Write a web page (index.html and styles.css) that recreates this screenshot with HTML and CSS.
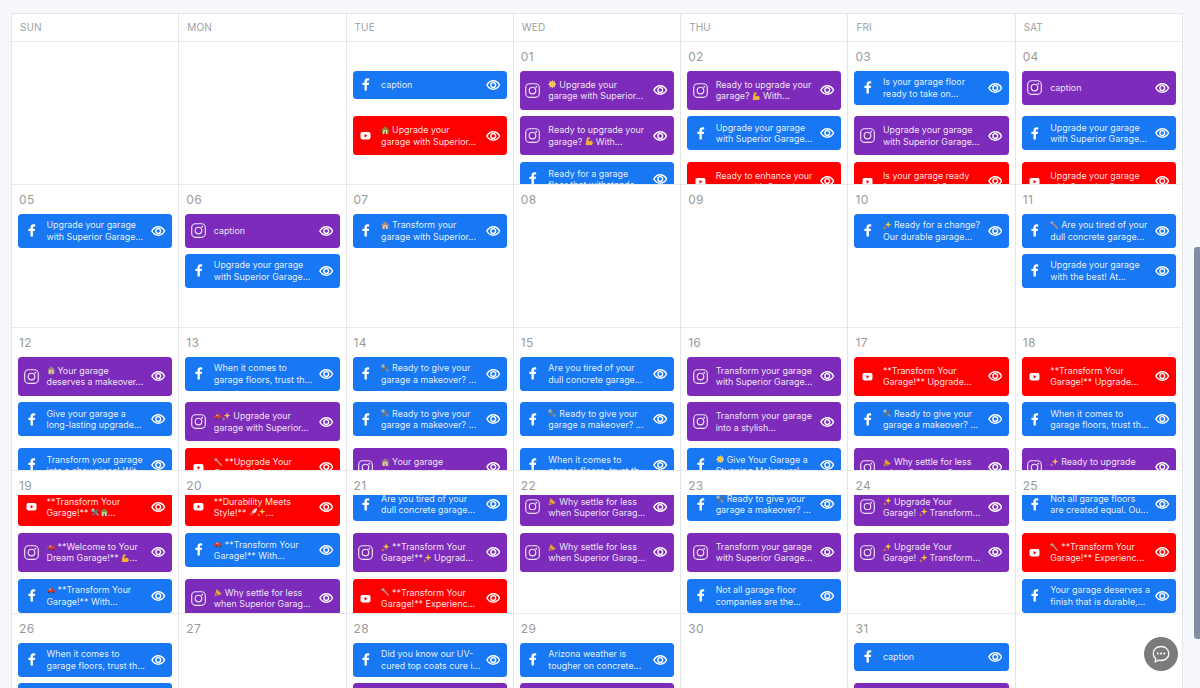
FILE: index.html
```html
<!DOCTYPE html>
<html lang="en">
<head>
<meta charset="utf-8">
<title>Content calendar</title>
<link rel="stylesheet" href="styles.css">
</head>
<body>
<svg class="defs" aria-hidden="true">
  <symbol id="fb" viewBox="0 0 15 15"><path fill="#fff" d="M8.900 13.500V8.100h1.900l.3-2.300H8.900V4.600c0-.7.3-1.100 1.100-1.100h1.200V1.500C10.900 1.400 10.300 1.300 9.600 1.300 7.800 1.300 6.500 2.400 6.500 4.300v1.500H4.400v2.300h2.100v5.400z"/></symbol>
  <symbol id="ig" viewBox="0 0 15 15"><rect x=".7" y=".7" width="13.600" height="13.600" rx="3.800" fill="none" stroke="#fff" stroke-opacity=".88" stroke-width="1.150"/><circle cx="7.500" cy="7.500" r="3.300" fill="none" stroke="#fff" stroke-opacity=".88" stroke-width="1.150"/><circle cx="11.300" cy="3.700" r=".9" fill="#fff" fill-opacity=".88"/></symbol>
  <symbol id="yt" viewBox="0 0 15 15"><rect x="2.500" y="4" width="10" height="7.400" rx="1.800" fill="#fff"/><path fill="#f00" d="M6.500 5.900v3.500l3-1.750z"/></symbol>
  <symbol id="eye" viewBox="0 0 14.500 10"><path fill="none" stroke="#fff" stroke-width="1.500" d="M.9 5C2.400 2.200 4.700 .8 7.250 .8s4.850 1.400 6.350 4.200c-1.500 2.800-3.800 4.200-6.350 4.200S2.400 7.800 .9 5z"/><circle cx="7.250" cy="5" r="2.400" fill="none" stroke="#fff" stroke-width="1.400"/></symbol>
  <symbol id="chat" viewBox="0 0 20 20"><path fill="none" stroke="#fff" stroke-width="1.300" d="M10 2.500c4.500 0 7.800 3 7.800 7s-3.300 7-7.800 7c-.9 0-1.700-.1-2.500-.3l-3.300 1.600.5-3.300C3.100 13.200 2.200 11.500 2.200 9.500c0-4 3.300-7 7.800-7z"/><circle cx="6.800" cy="9.500" r="1" fill="#fff"/><circle cx="10" cy="9.500" r="1" fill="#fff"/><circle cx="13.200" cy="9.500" r="1" fill="#fff"/></symbol>
  <symbol id="e-house" viewBox="0 0 12 12"><path fill="#a1887f" d="M6 .5 0 6h1.500v5.500h9V6H12z"/><rect x="3" y="6" width="6" height="5.500" fill="#eed9c4"/><rect x="5" y="7.500" width="2" height="4" fill="#8d6e63"/></symbol>
  <symbol id="e-hut" viewBox="0 0 12 12"><path fill="#7c8c3a" d="M6 .5 0 6h1.500v5.500h9V6H12z"/><rect x="3" y="6" width="6" height="5.500" fill="#f0d9b5"/><rect x="5" y="7.500" width="2" height="4" fill="#6d4c41"/></symbol>
  <symbol id="e-tools" viewBox="0 0 12 12"><path stroke="#8a98a2" stroke-width="2.400" d="M1.500 1.500l9 9"/><path stroke="#5d707c" stroke-width="2.400" d="M10.500 1.500l-9 9"/><path fill="#a4b4bd" d="M0 3 3 0l2.500 2.500-3 3z"/></symbol>
  <symbol id="e-spark" viewBox="0 0 12 12"><path fill="#f5c542" d="M7.300 0l1.200 3.800L12 5 8.500 6.200 7.300 10 6.100 6.200 2.600 5 6.100 3.800z"/><path fill="#f08a3c" d="M2.500 7l.7 2.100 2 .7-2 .7L2.500 12.500 1.800 10.500l-1.800-.7 1.800-.7z"/></symbol>
  <symbol id="e-car" viewBox="0 0 12 12"><path fill="#d83a3a" d="M0 8.500V6.300L2 5.500 3.500 2.800h4.300L9.800 5.500l2.200.7v2.800z"/><path fill="#9fc4de" d="M4 3.600h1.600v1.900H3z"/><circle cx="3" cy="9.200" r="1.500" fill="#444"/><circle cx="9" cy="9.200" r="1.500" fill="#444"/></symbol>
  <symbol id="e-wrench" viewBox="0 0 12 12"><path stroke="#c58a7a" stroke-width="2.100" d="M3 2l8 9"/><path fill="#9aa4aa" d="M0 2 3 0l2.300 2L2.700 4.700z"/></symbol>
  <symbol id="e-party" viewBox="0 0 12 12"><path fill="#e9a23b" d="M.8 11.500 3.500 1.500 11 8.500z"/><path fill="#9c6b3f" d="M2.500 6.500 7.200 10.500 4.700 11 1.800 9z"/></symbol>
  <symbol id="e-muscle" viewBox="0 0 12 12"><path fill="#f2b233" d="M3 .8h3.300l.8 1.800-2.200 1 .2 2.900C6 5.500 8 5 9.800 6c1.700 1 1.700 4 0 5-2.200 1-6.300 1-8.800.3.300-3.500.8-7.300 2-10.500z"/></symbol>
  <symbol id="e-star" viewBox="0 0 12 12"><path fill="#fde9a0" d="M6 0l1.300 2.700L10 1.500 9.300 4.300 12 6 9.300 7.700 10 10.500 7.300 9.300 6 12 4.700 9.300 2 10.500 2.700 7.700 0 6 2.700 4.300 2 1.500 4.700 2.700z"/><circle cx="6" cy="6" r="3.200" fill="#f7c32e"/></symbol>
  <symbol id="e-rocket" viewBox="0 0 12 12"><path fill="#d5dbe0" d="M11.500.5c-3.300.2-6 2-7.500 5.500l2 2c3.500-1.500 5.300-4.200 5.500-7.500z"/><path fill="#e0533a" d="M4 6 1 7l1.300.9L.5 11.500 4.100 9.700 5 11l1-3z"/></symbol>
</svg>

<main class="page">
  <section class="calendar">
    <div class="head">SUN</div><div class="head">MON</div><div class="head">TUE</div><div class="head">WED</div><div class="head">THU</div><div class="head">FRI</div><div class="head">SAT</div>

    <div class="cell"><div class="day"></div></div>
    <div class="cell"><div class="day"></div></div>
    <div class="cell"><div class="day"></div><div class="list">
      <div class="slot"><div class="card fb cap"><svg class="pi"><use href="#fb"/></svg><p class="txt">caption</p><svg class="eye"><use href="#eye"/></svg></div></div>
      <div class="slot"><div class="card yt"><svg class="pi"><use href="#yt"/></svg><p class="txt"><svg class="em"><use href="#e-hut"/></svg> Upgrade your<br>garage with Superior...</p><svg class="eye"><use href="#eye"/></svg></div></div>
    </div></div>
    <div class="cell"><div class="day">01</div><div class="list">
      <div class="slot"><div class="card ig"><svg class="pi"><use href="#ig"/></svg><p class="txt"><svg class="em"><use href="#e-star"/></svg> Upgrade your<br>garage with Superior...</p><svg class="eye"><use href="#eye"/></svg></div></div>
      <div class="slot"><div class="card ig"><svg class="pi"><use href="#ig"/></svg><p class="txt">Ready to upgrade your<br>garage? <svg class="em"><use href="#e-muscle"/></svg> With...</p><svg class="eye"><use href="#eye"/></svg></div></div>
      <div class="slot"><div class="card fb"><svg class="pi"><use href="#fb"/></svg><p class="txt">Ready for a garage<br>floor that withstands...</p><svg class="eye"><use href="#eye"/></svg></div></div>
    </div></div>
    <div class="cell"><div class="day">02</div><div class="list">
      <div class="slot"><div class="card ig"><svg class="pi"><use href="#ig"/></svg><p class="txt">Ready to upgrade your<br>garage? <svg class="em"><use href="#e-muscle"/></svg> With...</p><svg class="eye"><use href="#eye"/></svg></div></div>
      <div class="slot"><div class="card fb"><svg class="pi"><use href="#fb"/></svg><p class="txt">Upgrade your garage<br>with Superior Garage...</p><svg class="eye"><use href="#eye"/></svg></div></div>
      <div class="slot"><div class="card yt"><svg class="pi"><use href="#yt"/></svg><p class="txt">Ready to enhance your<br>garage with Superior...</p><svg class="eye"><use href="#eye"/></svg></div></div>
    </div></div>
    <div class="cell"><div class="day">03</div><div class="list">
      <div class="slot"><div class="card fb"><svg class="pi"><use href="#fb"/></svg><p class="txt">Is your garage floor<br>ready to take on...</p><svg class="eye"><use href="#eye"/></svg></div></div>
      <div class="slot"><div class="card ig"><svg class="pi"><use href="#ig"/></svg><p class="txt">Upgrade your garage<br>with Superior Garage...</p><svg class="eye"><use href="#eye"/></svg></div></div>
      <div class="slot"><div class="card yt"><svg class="pi"><use href="#yt"/></svg><p class="txt">Is your garage ready<br>for a new look? <svg class="em"><use href="#e-spark"/></svg>...</p><svg class="eye"><use href="#eye"/></svg></div></div>
    </div></div>
    <div class="cell"><div class="day">04</div><div class="list">
      <div class="slot"><div class="card ig cap"><svg class="pi"><use href="#ig"/></svg><p class="txt">caption</p><svg class="eye"><use href="#eye"/></svg></div></div>
      <div class="slot"><div class="card fb"><svg class="pi"><use href="#fb"/></svg><p class="txt">Upgrade your garage<br>with Superior Garage...</p><svg class="eye"><use href="#eye"/></svg></div></div>
      <div class="slot"><div class="card yt"><svg class="pi"><use href="#yt"/></svg><p class="txt">Upgrade your garage<br>with Superior Garage...</p><svg class="eye"><use href="#eye"/></svg></div></div>
    </div></div>

    <div class="cell compact"><div class="day">05</div><div class="list">
      <div class="slot"><div class="card fb"><svg class="pi"><use href="#fb"/></svg><p class="txt">Upgrade your garage<br>with Superior Garage...</p><svg class="eye"><use href="#eye"/></svg></div></div>
    </div></div>
    <div class="cell compact"><div class="day">06</div><div class="list">
      <div class="slot"><div class="card ig cap"><svg class="pi"><use href="#ig"/></svg><p class="txt">caption</p><svg class="eye"><use href="#eye"/></svg></div></div>
      <div class="slot"><div class="card fb"><svg class="pi"><use href="#fb"/></svg><p class="txt">Upgrade your garage<br>with Superior Garage...</p><svg class="eye"><use href="#eye"/></svg></div></div>
    </div></div>
    <div class="cell compact"><div class="day">07</div><div class="list">
      <div class="slot"><div class="card fb"><svg class="pi"><use href="#fb"/></svg><p class="txt"><svg class="em"><use href="#e-house"/></svg> Transform your<br>garage with Superior...</p><svg class="eye"><use href="#eye"/></svg></div></div>
    </div></div>
    <div class="cell compact"><div class="day">08</div></div>
    <div class="cell compact"><div class="day">09</div></div>
    <div class="cell compact"><div class="day">10</div><div class="list">
      <div class="slot"><div class="card fb"><svg class="pi"><use href="#fb"/></svg><p class="txt"><svg class="em"><use href="#e-spark"/></svg> Ready for a change?<br>Our durable garage...</p><svg class="eye"><use href="#eye"/></svg></div></div>
    </div></div>
    <div class="cell compact"><div class="day">11</div><div class="list">
      <div class="slot"><div class="card fb"><svg class="pi"><use href="#fb"/></svg><p class="txt"><svg class="em"><use href="#e-wrench"/></svg> Are you tired of your<br>dull concrete garage...</p><svg class="eye"><use href="#eye"/></svg></div></div>
      <div class="slot"><div class="card fb"><svg class="pi"><use href="#fb"/></svg><p class="txt">Upgrade your garage<br>with the best! At...</p><svg class="eye"><use href="#eye"/></svg></div></div>
    </div></div>

    <div class="cell"><div class="day">12</div><div class="list">
      <div class="slot"><div class="card ig"><svg class="pi"><use href="#ig"/></svg><p class="txt"><svg class="em"><use href="#e-house"/></svg> Your garage<br>deserves a makeover...</p><svg class="eye"><use href="#eye"/></svg></div></div>
      <div class="slot"><div class="card fb"><svg class="pi"><use href="#fb"/></svg><p class="txt">Give your garage a<br>long-lasting upgrade...</p><svg class="eye"><use href="#eye"/></svg></div></div>
      <div class="slot"><div class="card fb"><svg class="pi"><use href="#fb"/></svg><p class="txt">Transform your garage<br>into a showpiece! Wit...</p><svg class="eye"><use href="#eye"/></svg></div></div>
    </div></div>
    <div class="cell"><div class="day">13</div><div class="list">
      <div class="slot"><div class="card fb"><svg class="pi"><use href="#fb"/></svg><p class="txt">When it comes to<br>garage floors, trust th...</p><svg class="eye"><use href="#eye"/></svg></div></div>
      <div class="slot"><div class="card ig"><svg class="pi"><use href="#ig"/></svg><p class="txt"><svg class="em"><use href="#e-car"/></svg><svg class="em"><use href="#e-spark"/></svg> Upgrade your<br>garage with Superior...</p><svg class="eye"><use href="#eye"/></svg></div></div>
      <div class="slot"><div class="card yt"><svg class="pi"><use href="#yt"/></svg><p class="txt"><svg class="em"><use href="#e-wrench"/></svg> **Upgrade Your<br>Garage!** Experienc...</p><svg class="eye"><use href="#eye"/></svg></div></div>
    </div></div>
    <div class="cell"><div class="day">14</div><div class="list">
      <div class="slot"><div class="card fb"><svg class="pi"><use href="#fb"/></svg><p class="txt"><svg class="em"><use href="#e-tools"/></svg> Ready to give your<br>garage a makeover? ...</p><svg class="eye"><use href="#eye"/></svg></div></div>
      <div class="slot"><div class="card fb"><svg class="pi"><use href="#fb"/></svg><p class="txt"><svg class="em"><use href="#e-tools"/></svg> Ready to give your<br>garage a makeover? ...</p><svg class="eye"><use href="#eye"/></svg></div></div>
      <div class="slot"><div class="card ig"><svg class="pi"><use href="#ig"/></svg><p class="txt"><svg class="em"><use href="#e-house"/></svg> Your garage<br>deserves a makeover...</p><svg class="eye"><use href="#eye"/></svg></div></div>
    </div></div>
    <div class="cell"><div class="day">15</div><div class="list">
      <div class="slot"><div class="card fb"><svg class="pi"><use href="#fb"/></svg><p class="txt">Are you tired of your<br>dull concrete garage...</p><svg class="eye"><use href="#eye"/></svg></div></div>
      <div class="slot"><div class="card fb"><svg class="pi"><use href="#fb"/></svg><p class="txt"><svg class="em"><use href="#e-tools"/></svg> Ready to give your<br>garage a makeover? ...</p><svg class="eye"><use href="#eye"/></svg></div></div>
      <div class="slot"><div class="card fb"><svg class="pi"><use href="#fb"/></svg><p class="txt">When it comes to<br>garage floors, trust th...</p><svg class="eye"><use href="#eye"/></svg></div></div>
    </div></div>
    <div class="cell"><div class="day">16</div><div class="list">
      <div class="slot"><div class="card ig"><svg class="pi"><use href="#ig"/></svg><p class="txt">Transform your garage<br>with Superior Garage...</p><svg class="eye"><use href="#eye"/></svg></div></div>
      <div class="slot"><div class="card ig"><svg class="pi"><use href="#ig"/></svg><p class="txt">Transform your garage<br>into a stylish...</p><svg class="eye"><use href="#eye"/></svg></div></div>
      <div class="slot"><div class="card fb"><svg class="pi"><use href="#fb"/></svg><p class="txt"><svg class="em"><use href="#e-star"/></svg> Give Your Garage a<br>Stunning Makeover!...</p><svg class="eye"><use href="#eye"/></svg></div></div>
    </div></div>
    <div class="cell"><div class="day">17</div><div class="list">
      <div class="slot"><div class="card yt"><svg class="pi"><use href="#yt"/></svg><p class="txt">**Transform Your<br>Garage!** Upgrade...</p><svg class="eye"><use href="#eye"/></svg></div></div>
      <div class="slot"><div class="card fb"><svg class="pi"><use href="#fb"/></svg><p class="txt"><svg class="em"><use href="#e-tools"/></svg> Ready to give your<br>garage a makeover? ...</p><svg class="eye"><use href="#eye"/></svg></div></div>
      <div class="slot"><div class="card ig"><svg class="pi"><use href="#ig"/></svg><p class="txt"><svg class="em"><use href="#e-party"/></svg> Why settle for less<br>when Superior Garag...</p><svg class="eye"><use href="#eye"/></svg></div></div>
    </div></div>
    <div class="cell"><div class="day">18</div><div class="list">
      <div class="slot"><div class="card yt"><svg class="pi"><use href="#yt"/></svg><p class="txt">**Transform Your<br>Garage!** Upgrade...</p><svg class="eye"><use href="#eye"/></svg></div></div>
      <div class="slot"><div class="card fb"><svg class="pi"><use href="#fb"/></svg><p class="txt">When it comes to<br>garage floors, trust th...</p><svg class="eye"><use href="#eye"/></svg></div></div>
      <div class="slot"><div class="card ig"><svg class="pi"><use href="#ig"/></svg><p class="txt"><svg class="em"><use href="#e-spark"/></svg> Ready to upgrade<br>your garage floor...</p><svg class="eye"><use href="#eye"/></svg></div></div>
    </div></div>

    <div class="cell scrolled"><div class="day">19</div><div class="list"><div class="inner">
      <div class="slot"><div class="card yt"><svg class="pi"><use href="#yt"/></svg><p class="txt">**Transform Your<br>Garage!** <svg class="em"><use href="#e-tools"/></svg><svg class="em"><use href="#e-hut"/></svg>...</p><svg class="eye"><use href="#eye"/></svg></div></div>
      <div class="slot"><div class="card ig"><svg class="pi"><use href="#ig"/></svg><p class="txt"><svg class="em"><use href="#e-car"/></svg> **Welcome to Your<br>Dream Garage!** <svg class="em"><use href="#e-muscle"/></svg>...</p><svg class="eye"><use href="#eye"/></svg></div></div>
      <div class="slot"><div class="card fb"><svg class="pi"><use href="#fb"/></svg><p class="txt"><svg class="em"><use href="#e-car"/></svg> **Transform Your<br>Garage!** With...</p><svg class="eye"><use href="#eye"/></svg></div></div>
    </div></div></div>
    <div class="cell scrolled"><div class="day">20</div><div class="list"><div class="inner">
      <div class="slot"><div class="card yt"><svg class="pi"><use href="#yt"/></svg><p class="txt">**Durability Meets<br>Style!** <svg class="em"><use href="#e-rocket"/></svg><svg class="em"><use href="#e-spark"/></svg>...</p><svg class="eye"><use href="#eye"/></svg></div></div>
      <div class="slot"><div class="card fb"><svg class="pi"><use href="#fb"/></svg><p class="txt"><svg class="em"><use href="#e-car"/></svg> **Transform Your<br>Garage!** With...</p><svg class="eye"><use href="#eye"/></svg></div></div>
      <div class="slot"><div class="card ig"><svg class="pi"><use href="#ig"/></svg><p class="txt"><svg class="em"><use href="#e-party"/></svg> Why settle for less<br>when Superior Garag...</p><svg class="eye"><use href="#eye"/></svg></div></div>
    </div></div></div>
    <div class="cell scrolled"><div class="day">21</div><div class="list"><div class="inner">
      <div class="slot"><div class="card fb"><svg class="pi"><use href="#fb"/></svg><p class="txt">Are you tired of your<br>dull concrete garage...</p><svg class="eye"><use href="#eye"/></svg></div></div>
      <div class="slot"><div class="card ig"><svg class="pi"><use href="#ig"/></svg><p class="txt"><svg class="em"><use href="#e-spark"/></svg> **Transform Your<br>Garage!**<svg class="em"><use href="#e-spark"/></svg> Upgrad...</p><svg class="eye"><use href="#eye"/></svg></div></div>
      <div class="slot"><div class="card yt"><svg class="pi"><use href="#yt"/></svg><p class="txt"><svg class="em"><use href="#e-wrench"/></svg> **Transform Your<br>Garage!** Experienc...</p><svg class="eye"><use href="#eye"/></svg></div></div>
    </div></div></div>
    <div class="cell scrolled"><div class="day">22</div><div class="list"><div class="inner">
      <div class="slot"><div class="card ig"><svg class="pi"><use href="#ig"/></svg><p class="txt"><svg class="em"><use href="#e-party"/></svg> Why settle for less<br>when Superior Garag...</p><svg class="eye"><use href="#eye"/></svg></div></div>
      <div class="slot"><div class="card ig"><svg class="pi"><use href="#ig"/></svg><p class="txt"><svg class="em"><use href="#e-party"/></svg> Why settle for less<br>when Superior Garag...</p><svg class="eye"><use href="#eye"/></svg></div></div>
    </div></div></div>
    <div class="cell scrolled"><div class="day">23</div><div class="list"><div class="inner">
      <div class="slot"><div class="card fb"><svg class="pi"><use href="#fb"/></svg><p class="txt"><svg class="em"><use href="#e-tools"/></svg> Ready to give your<br>garage a makeover? ...</p><svg class="eye"><use href="#eye"/></svg></div></div>
      <div class="slot"><div class="card ig"><svg class="pi"><use href="#ig"/></svg><p class="txt">Transform your garage<br>with Superior Garage...</p><svg class="eye"><use href="#eye"/></svg></div></div>
      <div class="slot"><div class="card fb"><svg class="pi"><use href="#fb"/></svg><p class="txt">Not all garage floor<br>companies are the...</p><svg class="eye"><use href="#eye"/></svg></div></div>
    </div></div></div>
    <div class="cell scrolled"><div class="day">24</div><div class="list"><div class="inner">
      <div class="slot"><div class="card ig"><svg class="pi"><use href="#ig"/></svg><p class="txt"><svg class="em"><use href="#e-spark"/></svg> Upgrade Your<br>Garage! <svg class="em"><use href="#e-spark"/></svg> Transform...</p><svg class="eye"><use href="#eye"/></svg></div></div>
      <div class="slot"><div class="card ig"><svg class="pi"><use href="#ig"/></svg><p class="txt"><svg class="em"><use href="#e-spark"/></svg> Upgrade Your<br>Garage! <svg class="em"><use href="#e-spark"/></svg> Transform...</p><svg class="eye"><use href="#eye"/></svg></div></div>
    </div></div></div>
    <div class="cell scrolled"><div class="day">25</div><div class="list"><div class="inner">
      <div class="slot"><div class="card fb"><svg class="pi"><use href="#fb"/></svg><p class="txt">Not all garage floors<br>are created equal. Ou...</p><svg class="eye"><use href="#eye"/></svg></div></div>
      <div class="slot"><div class="card yt"><svg class="pi"><use href="#yt"/></svg><p class="txt"><svg class="em"><use href="#e-wrench"/></svg> **Transform Your<br>Garage!** Experienc...</p><svg class="eye"><use href="#eye"/></svg></div></div>
      <div class="slot"><div class="card fb"><svg class="pi"><use href="#fb"/></svg><p class="txt">Your garage deserves a<br>finish that is durable,...</p><svg class="eye"><use href="#eye"/></svg></div></div>
    </div></div></div>

    <div class="cell compact"><div class="day">26</div><div class="list">
      <div class="slot"><div class="card fb"><svg class="pi"><use href="#fb"/></svg><p class="txt">When it comes to<br>garage floors, trust th...</p><svg class="eye"><use href="#eye"/></svg></div></div>
      <div class="slot"><div class="card fb"><svg class="pi"><use href="#fb"/></svg><p class="txt">Upgrade your garage<br>with Superior Garage...</p><svg class="eye"><use href="#eye"/></svg></div></div>
    </div></div>
    <div class="cell compact"><div class="day">27</div></div>
    <div class="cell compact"><div class="day">28</div><div class="list">
      <div class="slot"><div class="card fb"><svg class="pi"><use href="#fb"/></svg><p class="txt">Did you know our UV-<br>cured top coats cure i...</p><svg class="eye"><use href="#eye"/></svg></div></div>
      <div class="slot"><div class="card ig"><svg class="pi"><use href="#ig"/></svg><p class="txt">Transform your garage<br>with Superior Garage...</p><svg class="eye"><use href="#eye"/></svg></div></div>
    </div></div>
    <div class="cell compact"><div class="day">29</div><div class="list">
      <div class="slot"><div class="card fb"><svg class="pi"><use href="#fb"/></svg><p class="txt">Arizona weather is<br>tougher on concrete...</p><svg class="eye"><use href="#eye"/></svg></div></div>
      <div class="slot"><div class="card ig"><svg class="pi"><use href="#ig"/></svg><p class="txt">Transform your garage<br>with Superior Garage...</p><svg class="eye"><use href="#eye"/></svg></div></div>
    </div></div>
    <div class="cell compact"><div class="day">30</div></div>
    <div class="cell compact"><div class="day">31</div><div class="list">
      <div class="slot"><div class="card fb cap"><svg class="pi"><use href="#fb"/></svg><p class="txt">caption</p><svg class="eye"><use href="#eye"/></svg></div></div>
      <div class="slot"><div class="card ig"><svg class="pi"><use href="#ig"/></svg><p class="txt">Transform your garage<br>with Superior Garage...</p><svg class="eye"><use href="#eye"/></svg></div></div>
    </div></div>
    <div class="cell compact"><div class="day"></div></div>
  </section>
</main>

<div class="scrollbar"></div>
<button class="chat" aria-label="Chat"><svg class="chat-icon"><use href="#chat"/></svg></button>
</body>
</html>
```

FILE: styles.css
```css
* { box-sizing: border-box; }

html, body {
  margin: 0;
  height: 688px;
  overflow: hidden;
}

body {
  background: #f6f8fd;
  font-family: Inter, "Noto Sans", sans-serif;
}

.defs {
  position: absolute;
  width: 0;
  height: 0;
}

.page {
  padding: 13px 17px 0 11px;
}

.calendar {
  display: grid;
  grid-template-columns: repeat(7, 1fr);
  grid-template-rows: 27.5px;
  grid-auto-rows: 143px;
  background: #fff;
  border-top: 1px solid #e4e6eb;
  border-right: 1px solid #e4e6eb;
}

.head {
  display: flex;
  align-items: center;
  padding-left: 8px;
  font-size: 10px;
  letter-spacing: .1px;
  color: #9b9fa6;
  border-left: 1px solid #e4e6eb;
  border-bottom: 1px solid #e8eaee;
}

.cell {
  display: flex;
  flex-direction: column;
  min-width: 0;
  overflow: hidden;
  border-left: 1px solid #e4e6eb;
  border-bottom: 1px solid #e8eaee;
}

.day {
  flex: none;
  height: 29px;
  padding: 7.5px 0 0 7px;
  font-size: 12px;
  line-height: 15px;
  letter-spacing: .35px;
  color: #9a9a9a;
}

.list {
  flex: 1;
  min-height: 0;
  overflow: hidden;
  padding: 0 6px;
}

.scrolled .day {
  height: 24px;
}

.scrolled .inner {
  margin-top: -7.2px;
}

.slot {
  height: 45.65px;
}

.compact .slot {
  height: 40px;
}

.card {
  display: flex;
  align-items: center;
  height: 34px;
  padding: 0 6.5px 0 5.5px;
  border-radius: 3.5px;
  color: #fff;
}

.card.ig,
.card.yt {
  height: 39px;
}

.card.fb.cap {
  height: 28px;
}

.card.ig.cap {
  height: 34px;
}

.fb { background: #1877f2; }
.ig { background: #7d2bbb; }
.yt { background: #ff0000; }

.pi {
  flex: none;
  width: 15px;
  height: 15px;
}

.txt {
  flex: 1;
  min-width: 0;
  margin: 0 0 0 8px;
  font-size: 8.9px;
  line-height: 11.2px;
  white-space: nowrap;
  color: rgba(255, 255, 255, .9);
}

.eye {
  flex: none;
  width: 14.5px;
  height: 10px;
}

.em {
  width: 8.5px;
  height: 8.5px;
  vertical-align: -1px;
}

.scrollbar {
  position: absolute;
  top: 247px;
  right: 0;
  width: 6px;
  height: 392px;
  border-radius: 3px 0 0 3px;
  background: #7f8ea3;
}

.chat {
  position: absolute;
  left: 1144px;
  top: 637px;
  width: 34px;
  height: 34px;
  padding: 0;
  display: flex;
  align-items: center;
  justify-content: center;
  border: 0;
  border-radius: 50%;
  background: #7b7b7b;
}

.chat-icon {
  width: 20px;
  height: 20px;
}
```
